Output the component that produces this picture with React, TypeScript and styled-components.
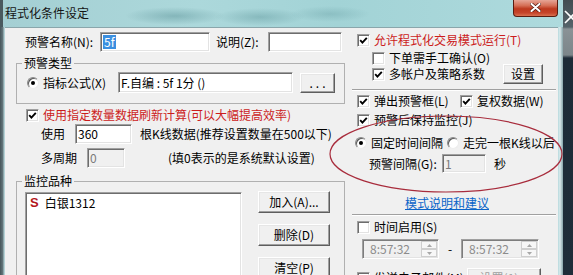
import React from "react";
import styled, { createGlobalStyle } from "styled-components";

const FONT = `"Noto Sans CJK SC", "Noto Sans", sans-serif`;

const GlobalStyle = createGlobalStyle`
  html, body { margin: 0; padding: 0; background: #1d2b37; }
  body { font-family: ${FONT}; font-size: 12px; }
  * { box-sizing: border-box; }
`;

const Desktop = styled.div`
  position: relative;
  width: 573px;
  height: 275px;
  overflow: hidden;
  display: flex;
  font-family: ${FONT};
  font-size: 12px;
  line-height: 14px;
  color: #000;
  background: linear-gradient(#434d52 0, #55636a 27px, #8a9296 29px, #7c868a 55px, #1d2b37 58px, #1f2d39 100%);
`;

const Window = styled.div`
  width: 563px;
  flex: none;
  display: flex;
  flex-direction: column;
  background: linear-gradient(90deg, #46555a 0, #66797e 3px, #b4d2d6 4px, #a9d3d7 50%, #b7dade 558px, #d9e9eb 560px, #86a3a8 563px);
`;

const TitleBar = styled.div`
  height: 27px;
  flex: none;
  display: flex;
  align-items: flex-start;
  padding-left: 5px;
  box-shadow: inset 3px 0 0 #4a5a5f;
  background:
    radial-gradient(ellipse 50px 9px at 175px 16px, rgba(60, 120, 126, 0.35), transparent),
    radial-gradient(ellipse 45px 9px at 260px 17px, rgba(60, 120, 126, 0.3), transparent),
    radial-gradient(ellipse 40px 8px at 330px 14px, rgba(60, 120, 126, 0.22), transparent),
    linear-gradient(90deg, #a4cfd3 0, #acd8db 35%, #a2d3d6 60%, #aedadd 100%);
`;

const Title = styled.span`
  margin-top: 6px;
  font-size: 12px;
  line-height: 14px;
  color: #151515;
`;

const CloseButton = styled.div`
  margin-left: auto;
  margin-right: 5px;
  width: 45px;
  height: 17px;
  border: 1px solid #5a1c10;
  border-top: none;
  border-radius: 0 0 4px 4px;
  background: linear-gradient(#e6a596 0, #d56f56 35%, #bd391e 55%, #c5442a 80%, #d9704f 100%);
  display: flex;
  align-items: flex-start;
  justify-content: center;
  padding-top: 3px;
`;

const BackStrip = styled.div`
  flex: 1;
  position: relative;
  overflow: hidden;
`;

const BackClose = styled.svg`
  position: absolute;
  left: 1px;
  top: 10px;
`;

const Client = styled.div`
  flex: 1;
  margin: 0 5px;
  background: #f0f0f0;
  display: flex;
  border-top: 1px solid #8aa6ab;
`;

const LeftCol = styled.div`
  width: 341px;
  flex: none;
  display: flex;
  flex-direction: column;
`;

const RightCol = styled.div`
  flex: 1;
  display: flex;
  flex-direction: column;
  min-width: 0;
`;

const Row = styled.div<{ $mt?: number; $pl?: number; $h?: number }>`
  display: flex;
  align-items: center;
  flex: none;
  height: ${(p) => p.$h ?? 14}px;
  margin-top: ${(p) => p.$mt ?? 0}px;
  padding-left: ${(p) => p.$pl ?? 0}px;
  white-space: nowrap;
`;

const Label = styled.span<{ $w?: number; $ml?: number; $red?: boolean }>`
  flex: none;
  ${(p) => (p.$w ? `width: ${p.$w}px;` : "")}
  margin-left: ${(p) => p.$ml ?? 0}px;
  color: ${(p) => (p.$red ? "#cc1c1c" : "#000")};
  white-space: nowrap;
`;

const Field = styled.div<{ $w: number; $h?: number; $disabled?: boolean; $ml?: number }>`
  flex: none;
  width: ${(p) => p.$w}px;
  height: ${(p) => p.$h ?? 20}px;
  margin-left: ${(p) => p.$ml ?? 0}px;
  background: ${(p) => (p.$disabled ? "#f0f0f0" : "#fff")};
  border: 1px solid;
  border-color: #a0a0a0 #ffffff #ffffff #a0a0a0;
  box-shadow: inset 1px 1px 0 #6d6d6d, inset -1px -1px 0 #e3e3e3;
  display: flex;
  align-items: center;
  padding: 0 2px;
  color: ${(p) => (p.$disabled ? "#7a7a7a" : "#000")};
  overflow: hidden;
  white-space: nowrap;
`;

const Selected = styled.span`
  background: #3b8fe0;
  color: #fff;
  padding: 0 1px;
`;

const Button = styled.div<{ $w: number; $h?: number; $disabled?: boolean; $ml?: number; $mr?: number }>`
  flex: none;
  width: ${(p) => p.$w}px;
  height: ${(p) => p.$h ?? 22}px;
  margin-left: ${(p) => (p.$ml === undefined ? "0px" : p.$ml < 0 ? "auto" : `${p.$ml}px`)};
  margin-right: ${(p) => p.$mr ?? 0}px;
  background: #f0f0f0;
  border: 1px solid;
  border-color: #ffffff #5e5e5e #5e5e5e #ffffff;
  box-shadow: inset -1px -1px 0 #a0a0a0, inset 1px 1px 0 #e6e6e6;
  display: flex;
  align-items: center;
  justify-content: center;
  color: ${(p) => (p.$disabled ? "#a0a0a0" : "#000")};
  white-space: nowrap;
`;

const Dots = styled.span`
  letter-spacing: 3px;
  margin-left: 3px;
`;

const GroupBox = styled.fieldset<{ $mt: number }>`
  margin: ${(p) => p.$mt}px 0 0 11px;
  width: 329px;
  padding: 0;
  border: 1px solid #b0b0b0;
  min-width: 0;
  flex: none;
`;

const GroupLegend = styled.legend`
  margin-left: 5px;
  padding: 0 2px;
  line-height: 14px;
  font-size: 12px;
`;

const GroupBody = styled.div<{ $pt: number; $pb: number; $pl: number }>`
  display: flex;
  align-items: flex-start;
  padding: ${(p) => `${p.$pt}px 0 ${p.$pb}px ${p.$pl}px`};
`;

const CheckBoxBox = styled.span`
  width: 13px;
  height: 13px;
  flex: none;
  background: #fff;
  border: 1px solid;
  border-color: #a0a0a0 #ffffff #ffffff #a0a0a0;
  box-shadow: inset 1px 1px 0 #6d6d6d, inset -1px -1px 0 #e3e3e3;
  display: inline-flex;
  align-items: center;
  justify-content: center;
`;

const RadioCircle = styled.span`
  width: 12px;
  height: 12px;
  flex: none;
  border-radius: 50%;
  background: #fff;
  border: 1px solid;
  border-color: #8a8a8a #ececec #ececec #8a8a8a;
  box-shadow: inset 1px 1px 0 #5a5a5a;
  display: inline-flex;
  align-items: center;
  justify-content: center;
`;

const RadioDot = styled.span`
  width: 4px;
  height: 4px;
  border-radius: 50%;
  background: #000;
`;

const Option = styled.span<{ $w?: number; $gap?: number }>`
  display: inline-flex;
  align-items: center;
  gap: ${(p) => p.$gap ?? 4}px;
  flex: none;
  ${(p) => (p.$w ? `width: ${p.$w}px;` : "")}
  white-space: nowrap;
`;

const ListBox = styled.div`
  width: 217px;
  height: 110px;
  flex: none;
  background: #fff;
  border: 1px solid;
  border-color: #a0a0a0 #ffffff #ffffff #a0a0a0;
  box-shadow: inset 1px 1px 0 #6d6d6d, inset -1px -1px 0 #e3e3e3;
  padding: 3px 4px;
`;

const ListItem = styled.div`
  display: flex;
  align-items: center;
  gap: 6px;
  height: 14px;
`;

const SymbolMark = styled.span`
  color: #b3161b;
  font-family: "Liberation Sans", Arial, sans-serif;
  font-weight: bold;
  font-size: 13px;
`;

const ButtonStack = styled.div`
  display: flex;
  flex-direction: column;
  gap: 11px;
  margin-left: 16px;
  margin-top: -1px;
`;

const Separator = styled.div<{ $mt: number }>`
  height: 2px;
  flex: none;
  margin: ${(p) => p.$mt}px 2px 0 6px;
  border-top: 1px solid #a0a0a0;
  border-bottom: 1px solid #ffffff;
`;

const LinkRow = styled.div<{ $mt: number }>`
  height: 14px;
  flex: none;
  margin-top: ${(p) => p.$mt}px;
  text-align: center;
  padding-right: 10px;
`;

const Link = styled.span`
  color: #0a64c8;
  text-decoration: underline;
`;

const TimeBox = styled.div<{ $w: number }>`
  width: ${(p) => p.$w}px;
  height: 20px;
  flex: none;
  background: #f0f0f0;
  border: 1px solid;
  border-color: #a0a0a0 #ffffff #ffffff #a0a0a0;
  box-shadow: inset 1px 1px 0 #7d7d7d, inset -1px -1px 0 #e3e3e3;
  display: flex;
  align-items: center;
  padding-left: 7px;
  color: #8c8c8c;
`;

const Spinner = styled.div`
  margin-left: auto;
  margin-right: 1px;
  width: 16px;
  height: 16px;
  display: flex;
  flex-direction: column;
`;

const SpinButton = styled.div`
  flex: 1;
  border: 1px solid #cfcfcf;
  background: #f7f7f7;
  display: flex;
  align-items: center;
  justify-content: center;
`;

const Dash = styled.span`
  width: 22px;
  text-align: center;
  flex: none;
`;

const Annotation = styled.svg`
  position: absolute;
  left: 0;
  top: 0;
  pointer-events: none;
`;

function Check({ checked }: { checked?: boolean }) {
  return (
    <CheckBoxBox>
      {checked && (
        <svg width="9" height="9" viewBox="0 0 9 9">
          <path d="M1.2 4.2 L3.4 6.6 L7.8 1.8" stroke="#000" strokeWidth="1.9" fill="none" />
        </svg>
      )}
    </CheckBoxBox>
  );
}

function Radio({ checked }: { checked?: boolean }) {
  return <RadioCircle>{checked && <RadioDot />}</RadioCircle>;
}

function Arrow({ up }: { up?: boolean }) {
  return (
    <svg width="5" height="3" viewBox="0 0 5 3">
      <path d={up ? "M0 3 L2.5 0 L5 3 Z" : "M0 0 L2.5 3 L5 0 Z"} fill="#a8a8a8" />
    </svg>
  );
}

function TimePicker({ w }: { w: number }) {
  return (
    <TimeBox $w={w}>
      8:57:32
      <Spinner>
        <SpinButton>
          <Arrow up />
        </SpinButton>
        <SpinButton>
          <Arrow />
        </SpinButton>
      </Spinner>
    </TimeBox>
  );
}

export default function App() {
  return (
    <>
      <GlobalStyle />
      <Desktop>
        <Window>
          <TitleBar>
            <Title>程式化条件设定</Title>
            <CloseButton>
              <svg width="11" height="9" viewBox="0 0 11 9">
                <path d="M1.5 1 L9.5 8 M9.5 1 L1.5 8" stroke="#4a1208" strokeWidth="3.4" strokeLinecap="round" />
                <path d="M1.5 1 L9.5 8 M9.5 1 L1.5 8" stroke="#fff" strokeWidth="2.2" strokeLinecap="round" />
              </svg>
            </CloseButton>
          </TitleBar>
          <Client>
            <LeftCol>
              <Row $mt={4} $pl={20} $h={20}>
                <Label $w={75}>预警名称(N):</Label>
                <Field $w={110}>
                  <Selected>5f</Selected>
                </Field>
                <Label $w={52} $ml={6}>说明(Z):</Label>
                <Field $w={74} />
              </Row>

              <GroupBox $mt={4}>
                <GroupLegend>预警类型</GroupLegend>
                <GroupBody $pt={2} $pb={10} $pl={10}>
                  <Row $h={21}>
                    <Option>
                      <Radio checked />
                      <Label $w={75}>指标公式(X)</Label>
                    </Option>
                    <Field $w={175} $h={21}>F.自编 : 5f 1分 ()</Field>
                    <Button $w={35} $h={20} $ml={7}>
                      <Dots>...</Dots>
                    </Button>
                  </Row>
                </GroupBody>
              </GroupBox>

              <Row $mt={4} $pl={21}>
                <Option>
                  <Check checked />
                  <Label $red>使用指定数量数据刷新计算(可以大幅提高效率)</Label>
                </Option>
              </Row>

              <Row $mt={2} $pl={36} $h={20}>
                <Label $w={34}>使用</Label>
                <Field $w={57}>360</Field>
                <Label $ml={8}>根K线数据(推荐设置数量在500以下)</Label>
              </Row>

              <Row $mt={4} $pl={36} $h={20}>
                <Label $w={46}>多周期</Label>
                <Field $w={38} $disabled>0</Field>
                <Label $ml={43}>(填0表示的是系统默认设置)</Label>
              </Row>

              <GroupBox $mt={6}>
                <GroupLegend>监控品种</GroupLegend>
                <GroupBody $pt={4} $pb={0} $pl={8}>
                  <ListBox>
                    <ListItem>
                      <SymbolMark>S</SymbolMark>
                      <span>白银1312</span>
                    </ListItem>
                  </ListBox>
                  <ButtonStack>
                    <Button $w={72}>加入(A)...</Button>
                    <Button $w={72}>删除(D)</Button>
                    <Button $w={72}>清空(P)</Button>
                  </ButtonStack>
                </GroupBody>
              </GroupBox>
            </LeftCol>

            <RightCol>
              <Row $mt={5} $pl={11}>
                <Option>
                  <Check checked />
                  <Label $red>允许程式化交易模式运行(T)</Label>
                </Option>
              </Row>
              <Row $mt={4} $pl={26}>
                <Option>
                  <Check />
                  <Label>下单需手工确认(O)</Label>
                </Option>
              </Row>
              <Row $mt={-1} $pl={26} $h={20}>
                <Option>
                  <Check checked />
                  <Label>多帐户及策略系数</Label>
                </Option>
                <Button $w={40} $h={20} $ml={-1} $mr={15}>设置</Button>
              </Row>

              <Separator $mt={5} />

              <Row $mt={3} $pl={11}>
                <Option $w={103}>
                  <Check checked />
                  <Label>弹出预警框(L)</Label>
                </Option>
                <Option>
                  <Check checked />
                  <Label>复权数据(W)</Label>
                </Option>
              </Row>
              <Row $mt={5} $pl={11}>
                <Option>
                  <Check checked />
                  <Label>预警后保持监控(J)</Label>
                </Option>
              </Row>

              <Row $mt={9} $pl={9}>
                <Option $w={92}>
                  <Radio checked />
                  <Label>固定时间间隔</Label>
                </Option>
                <Option>
                  <Radio />
                  <Label>走完一根K线以后</Label>
                </Option>
              </Row>
              <Row $mt={4} $pl={23} $h={19}>
                <Label $w={73}>预警间隔(G):</Label>
                <Field $w={44} $h={19} $disabled>1</Field>
                <Label $ml={8}>秒</Label>
              </Row>

              <LinkRow $mt={23}>
                <Link>模式说明和建议</Link>
              </LinkRow>

              <Separator $mt={4} />

              <Row $mt={4} $pl={11}>
                <Option>
                  <Check />
                  <Label>时间启用(S)</Label>
                </Option>
              </Row>
              <Row $mt={5} $pl={16} $h={20}>
                <TimePicker w={77} />
                <Dash>-</Dash>
                <TimePicker w={78} />
              </Row>
              <Row $mt={9} $pl={11} $h={20}>
                <Option $w={110}>
                  <Check />
                  <Label>发送电子邮件(M)</Label>
                </Option>
                <Button $w={74} $h={20} $disabled>设置(1)...</Button>
              </Row>
            </RightCol>
          </Client>
        </Window>
        <BackStrip>
          <BackClose width="14" height="14" viewBox="0 0 14 14">
            <path d="M1 1 L13 13 M13 1 L1 13" stroke="#ffffff" strokeWidth="1.6" />
          </BackClose>
        </BackStrip>
        <Annotation width={573} height={275} viewBox="0 0 573 275">
          <ellipse cx={446} cy={154} rx={116} ry={38} fill="none" stroke="#a82c3c" strokeWidth={1.2} />
        </Annotation>
      </Desktop>
    </>
  );
}
